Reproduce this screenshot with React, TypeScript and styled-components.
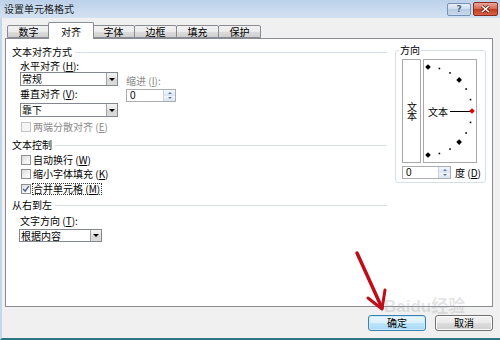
import styled, { createGlobalStyle } from "styled-components";

const GlobalStyle = createGlobalStyle`
  html, body {
    margin: 0;
    padding: 0;
    background: #f0f0f0;
  }
  body {
    width: 500px;
    height: 340px;
    overflow: hidden;
    font-family: "Noto Sans CJK SC", "Noto Sans", sans-serif;
    font-size: 10px;
    line-height: 12px;
    color: #000;
  }
  u {
    text-decoration-thickness: 1px;
    text-underline-offset: 1px;
  }
`;

const Window = styled.div`
  position: relative;
  width: 500px;
  height: 340px;
  display: flex;
  flex-direction: column;
  background: #f0f0f0;
`;

const TitleBar = styled.div`
  flex: none;
  height: 18px;
  display: flex;
  align-items: center;
  gap: 2px;
  padding: 0 2px 0 4px;
  background: linear-gradient(#bcd1ea, #d3e2f2);
`;

const Title = styled.div`
  flex: 1;
  color: #1e1e1e;
`;

const CaptionButton = styled.div<{ $close?: boolean }>`
  width: ${(p) => (p.$close ? 25 : 24)}px;
  height: ${(p) => (p.$close ? 14 : 13)}px;
  box-sizing: border-box;
  border: 1px solid ${(p) => (p.$close ? "#8a2a1c" : "#7591b3")};
  border-radius: 2px;
  background: ${(p) =>
    p.$close
      ? "linear-gradient(#e9a99b, #d3664f 50%, #c2391d 50%, #d4644a)"
      : "linear-gradient(#e6eef7, #cddcee 50%, #b8cce5 50%, #c9d9ed)"};
  display: flex;
  align-items: center;
  justify-content: center;
  color: #52657f;
  font: bold 9px "DejaVu Sans", sans-serif;
`;

const Main = styled.div`
  flex: 1;
  display: flex;
  flex-direction: column;
  border-left: 2px solid #c4d7ec;
  border-bottom: 2px solid #2d7485;
  padding: 4px 7px 0 3px;
`;

const TabRow = styled.div`
  display: flex;
  align-items: flex-end;
  height: 16px;
  padding-left: 2px;
  position: relative;
  z-index: 1;
`;

const Tab = styled.div<{ $active?: boolean }>`
  box-sizing: border-box;
  position: relative;
  z-index: ${(p) => (p.$active ? 2 : 1)};
  width: ${(p) => (p.$active ? 46 : 43)}px;
  height: ${(p) => (p.$active ? 17 : 13)}px;
  margin: 0 ${(p) => (p.$active ? -2 : -1)}px ${(p) => (p.$active ? -1 : 0)}px
    ${(p) => (p.$active ? -1 : 0)}px;
  border: 1px solid #898c95;
  border-bottom: ${(p) => (p.$active ? "none" : "1px solid #898c95")};
  border-radius: 2px 2px 0 0;
  background: ${(p) =>
    p.$active ? "#fff" : "linear-gradient(#f2f2f2, #ebebeb 50%, #dddddd 50%, #cfcfcf)"};
  display: flex;
  align-items: ${(p) => (p.$active ? "flex-start" : "center")};
  padding-top: ${(p) => (p.$active ? 3 : 0)}px;
  justify-content: center;
`;

const Panel = styled.div`
  box-sizing: border-box;
  height: 269px;
  background: #fff;
  border: 1px solid #898c95;
  padding: 7px 6px 0 6px;
  display: flex;
  gap: 8px;
`;

const LeftColumn = styled.div`
  width: 375px;
  display: flex;
  flex-direction: column;
`;

const SectionHeader = styled.div<{ $top?: number }>`
  display: flex;
  align-items: center;
  gap: 3px;
  height: 12px;
  margin-top: ${(p) => p.$top ?? 0}px;
  &::after {
    content: "";
    flex: 1;
    border-top: 1px solid #d5dfe5;
  }
`;

const AlignBlock = styled.div`
  display: flex;
  gap: 8px;
  margin-left: 8px;
`;

const SubColumn = styled.div`
  display: flex;
  flex-direction: column;
`;

const FieldLabel = styled.div<{ $top?: number; $left?: number; $muted?: boolean }>`
  height: 11px;
  line-height: 11px;
  white-space: nowrap;
  margin-top: ${(p) => p.$top ?? 0}px;
  margin-left: ${(p) => p.$left ?? 0}px;
  color: ${(p) => (p.$muted ? "#8a8a8a" : "#000")};
`;

const Select = styled.div<{ $width: number; $top?: number; $left?: number; $height?: number }>`
  box-sizing: border-box;
  width: ${(p) => p.$width}px;
  height: ${(p) => p.$height ?? 14}px;
  margin-top: ${(p) => p.$top ?? 0}px;
  margin-left: ${(p) => p.$left ?? 0}px;
  border: 1px solid #828790;
  background: #fff;
  display: flex;
  align-items: center;
  padding-left: 1px;
`;

const DropButton = styled.div`
  margin-left: auto;
  width: 11px;
  height: 100%;
  box-sizing: border-box;
  border-left: 1px solid #a3a3a3;
  background: linear-gradient(#f4f4f4, #e4e4e4 50%, #d6d6d6 50%, #dcdcdc);
  display: flex;
  align-items: center;
  justify-content: center;
  &::before {
    content: "";
    border-left: 3px solid transparent;
    border-right: 3px solid transparent;
    border-top: 3px solid #000;
  }
`;

const SpinBox = styled.div<{ $top?: number }>`
  box-sizing: border-box;
  width: 50px;
  height: 13px;
  margin-top: ${(p) => p.$top ?? 0}px;
  border: 1px solid #abadb3;
  background: #fff;
  display: flex;
  align-items: center;
  padding-left: 3px;
  font-family: "Liberation Sans", sans-serif;
  font-size: 10px;
`;

const SpinButtons = styled.div`
  margin-left: auto;
  width: 11px;
  height: 100%;
  display: flex;
  flex-direction: column;
  border-left: 1px solid #c9d4e0;
`;

const SpinHalf = styled.div<{ $down?: boolean }>`
  flex: 1;
  background: linear-gradient(#f3f7fb, #d9e4f0);
  display: flex;
  align-items: center;
  justify-content: center;
  &::before {
    content: "";
    border-left: 2px solid transparent;
    border-right: 2px solid transparent;
    ${(p) => (p.$down ? "border-top: 2px solid #5a7aa6;" : "border-bottom: 2px solid #5a7aa6;")}
  }
`;

const CheckRow = styled.div<{ $top?: number }>`
  display: flex;
  align-items: center;
  gap: 1px;
  height: 12px;
  margin-top: ${(p) => p.$top ?? 0}px;
  margin-left: 9px;
`;

const Box = styled.div<{ $disabled?: boolean }>`
  width: 10px;
  height: 10px;
  box-sizing: border-box;
  border: 1px solid ${(p) => (p.$disabled ? "#c5c5c5" : "#8e8f8f")};
  background: ${(p) =>
    p.$disabled ? "#f4f4f4" : "linear-gradient(135deg, #dcdcdc, #f6f6f6 70%, #fff)"};
  display: flex;
  align-items: center;
  justify-content: center;
`;

const CheckText = styled.span<{ $focused?: boolean; $disabled?: boolean }>`
  line-height: 10px;
  padding: 0 1px 0 0;
  border: 1px dotted ${(p) => (p.$focused ? "#333" : "transparent")};
  color: ${(p) => (p.$disabled ? "#8a8a8a" : "#000")};
  white-space: nowrap;
`;

const Group = styled.fieldset`
  box-sizing: border-box;
  width: 91px;
  min-width: 0;
  margin: -2px 0 0 0;
  padding: 3px 4px 3px 6px;
  border: 1px solid #d5dfe5;
  border-radius: 3px;
  align-self: flex-start;
`;

const GroupLegend = styled.legend`
  padding: 0 1px;
  margin-left: -3px;
  line-height: 12px;
`;

const OrientationRow = styled.div`
  display: flex;
  gap: 2px;
`;

const VerticalBox = styled.div`
  box-sizing: border-box;
  width: 19px;
  height: 104px;
  border: 1px solid #a9a9a9;
  display: flex;
  align-items: center;
  justify-content: center;
`;

const VerticalText = styled.span`
  writing-mode: vertical-rl;
  text-orientation: upright;
  line-height: 12px;
  letter-spacing: -1px;
`;

const DialBox = styled.div`
  box-sizing: border-box;
  width: 54px;
  height: 104px;
  border: 1px solid #a9a9a9;
  display: flex;
`;

const DegreeRow = styled.div`
  display: flex;
  align-items: center;
  gap: 4px;
  margin-top: 3px;
  white-space: nowrap;
`;

const ButtonRow = styled.div`
  display: flex;
  justify-content: flex-end;
  gap: 9px;
  margin-top: 8px;
`;

const DialogButton = styled.div<{ $default?: boolean }>`
  box-sizing: border-box;
  width: 58px;
  height: 16px;
  border: 1px solid ${(p) => (p.$default ? "#3c7fb1" : "#707070")};
  border-radius: 3px;
  background: ${(p) =>
    p.$default
      ? "linear-gradient(#eaf6fd, #d9f0fc 50%, #bee6fd 50%, #a7d9f5)"
      : "linear-gradient(#f2f2f2, #ebebeb 50%, #dddddd 50%, #cfcfcf)"};
  box-shadow: inset 0 0 0 1px ${(p) => (p.$default ? "#c8ebfc" : "#fcfcfc")};
  display: flex;
  align-items: center;
  justify-content: center;
`;

const Watermark = styled.div`
  position: absolute;
  left: 384px;
  top: 292px;
  font: bold 17px "Liberation Sans", "Noto Sans CJK SC", sans-serif;
  color: rgba(160, 160, 160, 0.28);
  pointer-events: none;
  white-space: nowrap;
`;

const ArrowLayer = styled.svg`
  position: absolute;
  left: 350px;
  top: 245px;
  pointer-events: none;
`;

const dots = Array.from({ length: 13 }, (_, i) => {
  const a = ((-90 + i * 15) * Math.PI) / 180;
  return { x: 4 + 44 * Math.cos(a), y: 51 + 44 * Math.sin(a), big: i % 3 === 0, red: i === 6 };
});

function Dial() {
  return (
    <svg width="52" height="102" viewBox="0 0 52 102">
      <text x="4" y="55.5" fontSize="10" fontFamily='"Noto Sans CJK SC", sans-serif'>
        文本
      </text>
      <line x1="26" y1="51.5" x2="47" y2="51.5" stroke="#000" strokeWidth="1" />
      {dots.map((d, i) =>
        d.big ? (
          <rect
            key={i}
            x={d.x - 2}
            y={d.y - 2}
            width="4"
            height="4"
            fill={d.red ? "#e00000" : "#000"}
            transform={`rotate(45 ${d.x} ${d.y})`}
          />
        ) : (
          <rect key={i} x={d.x - 0.8} y={d.y - 0.8} width="1.6" height="1.6" fill="#000" />
        )
      )}
    </svg>
  );
}

function Check({ label, accel, checked, disabled, focused, top }: {
  label: string;
  accel: string;
  checked?: boolean;
  disabled?: boolean;
  focused?: boolean;
  top?: number;
}) {
  return (
    <CheckRow $top={top}>
      <Box $disabled={disabled}>
        {checked && (
          <svg width="8" height="8" viewBox="0 0 8 8">
            <polyline points="1.2,4 3.2,6.2 6.8,1.2" fill="none" stroke="#4a5f97" strokeWidth="1.4" />
          </svg>
        )}
      </Box>
      <CheckText $focused={focused} $disabled={disabled}>
        {label} (<u>{accel}</u>)
      </CheckText>
    </CheckRow>
  );
}

function Spinner({ top }: { top?: number }) {
  return (
    <SpinBox $top={top}>
      0
      <SpinButtons>
        <SpinHalf />
        <SpinHalf $down />
      </SpinButtons>
    </SpinBox>
  );
}

const tabs = ["数字", "对齐", "字体", "边框", "填充", "保护"];

export default function App() {
  return (
    <>
      <GlobalStyle />
      <Window>
        <TitleBar>
          <Title>设置单元格格式</Title>
          <CaptionButton>?</CaptionButton>
          <CaptionButton $close>
            <svg width="11" height="8" viewBox="0 0 11 8">
              <path d="M2 1 L9 7 M9 1 L2 7" stroke="#6b1a0e" strokeWidth="3" />
              <path d="M2 1 L9 7 M9 1 L2 7" stroke="#fff" strokeWidth="1.6" />
            </svg>
          </CaptionButton>
        </TitleBar>
        <Main>
          <TabRow>
            {tabs.map((t) => (
              <Tab key={t} $active={t === "对齐"}>
                {t}
              </Tab>
            ))}
          </TabRow>
          <Panel>
            <LeftColumn>
              <SectionHeader>文本对齐方式</SectionHeader>
              <AlignBlock>
                <SubColumn>
                  <FieldLabel $top={2}>
                    水平对齐 (<u>H</u>):
                  </FieldLabel>
                  <Select $width={98} $top={1}>
                    常规
                    <DropButton />
                  </Select>
                  <FieldLabel $top={2}>
                    垂直对齐 (<u>V</u>):
                  </FieldLabel>
                  <Select $width={98} $top={4}>
                    靠下
                    <DropButton />
                  </Select>
                </SubColumn>
                <SubColumn>
                  <FieldLabel $top={17} $muted>
                    缩进 (<u>I</u>):
                  </FieldLabel>
                  <Spinner top={3} />
                </SubColumn>
              </AlignBlock>
              <Check label="两端分散对齐" accel="E" disabled top={4} />
              <SectionHeader $top={6}>文本控制</SectionHeader>
              <Check label="自动换行" accel="W" top={3} />
              <Check label="缩小字体填充" accel="K" top={2} />
              <Check label="合并单元格" accel="M" checked focused top={3} />
              <SectionHeader $top={4}>从右到左</SectionHeader>
              <FieldLabel $top={4} $left={8}>
                文字方向 (<u>T</u>):
              </FieldLabel>
              <Select $width={83} $top={3} $left={7} $height={13}>
                根据内容
                <DropButton />
              </Select>
            </LeftColumn>
            <Group>
              <GroupLegend>方向</GroupLegend>
              <OrientationRow>
                <VerticalBox>
                  <VerticalText>文本</VerticalText>
                </VerticalBox>
                <DialBox>
                  <Dial />
                </DialBox>
              </OrientationRow>
              <DegreeRow>
                <Spinner />
                <span>
                  度 (<u>D</u>)
                </span>
              </DegreeRow>
            </Group>
          </Panel>
          <ButtonRow>
            <DialogButton $default>确定</DialogButton>
            <DialogButton>取消</DialogButton>
          </ButtonRow>
        </Main>
        <Watermark>Baidu经验</Watermark>
        <ArrowLayer width="45" height="70" viewBox="0 0 45 70">
          <path d="M7 8 L32 63" stroke="#c00d1a" strokeWidth="3.5" strokeLinecap="round" />
          <path d="M18 53 L32 64 L35 45" fill="none" stroke="#c00d1a" strokeWidth="3" strokeLinecap="round" strokeLinejoin="round" />
        </ArrowLayer>
      </Window>
    </>
  );
}
